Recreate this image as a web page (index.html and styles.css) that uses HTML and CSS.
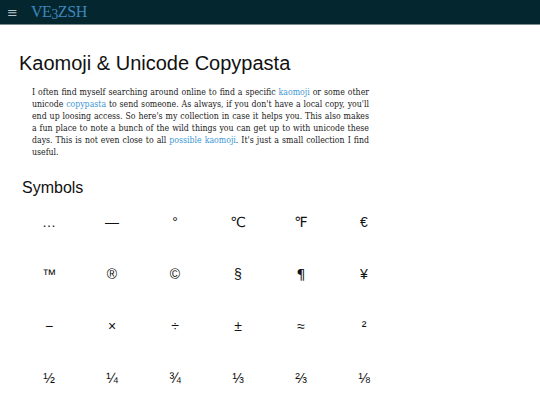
FILE: index.html
```html
<!DOCTYPE html>
<html lang="en">
<head>
<meta charset="utf-8">
<title>Kaomoji &amp; Unicode Copypasta</title>
<link rel="stylesheet" href="styles.css">
</head>
<body>
<header class="topbar">
  <span class="burger">&#8801;</span>
  <a class="brand" href="#">VE<span class="osf">3</span>ZSH</a>
</header>
<main class="content">
  <h1 class="title">Kaomoji &amp; Unicode Copypasta</h1>
  <p class="intro">I often find myself searching around online to find a specific <a href="#">kaomoji</a> or some other unicode <a href="#">copypasta</a> to send someone. As always, if you don't have a local copy, you'll end up loosing access. So here's my collection in case it helps you. This also makes a fun place to note a bunch of the wild things you can get up to with unicode these days. This is not even close to all <a href="#">possible kaomoji</a>. It's just a small collection I find useful.</p>
  <h2 class="section">Symbols</h2>
  <div class="grid">
    <span class="cell">&hellip;</span>
    <span class="cell">&mdash;</span>
    <span class="cell">&deg;</span>
    <span class="cell">&#8451;</span>
    <span class="cell">&#8457;</span>
    <span class="cell">&euro;</span>
    <span class="cell">&trade;</span>
    <span class="cell">&reg;</span>
    <span class="cell">&copy;</span>
    <span class="cell">&sect;</span>
    <span class="cell alt">&para;</span>
    <span class="cell">&yen;</span>
    <span class="cell">&minus;</span>
    <span class="cell">&times;</span>
    <span class="cell">&divide;</span>
    <span class="cell">&plusmn;</span>
    <span class="cell">&asymp;</span>
    <span class="cell">&sup2;</span>
    <span class="cell">&frac12;</span>
    <span class="cell">&frac14;</span>
    <span class="cell">&frac34;</span>
    <span class="cell">&#8531;</span>
    <span class="cell">&#8532;</span>
    <span class="cell">&#8539;</span>
  </div>
</main>
</body>
</html>
```
FILE: styles.css
```css
html, body {
  margin: 0;
  padding: 0;
  background: #ffffff;
}
body {
  font-family: "Liberation Sans", Arial, sans-serif;
  color: #111;
  overflow: hidden;
}
.topbar {
  height: 24px;
  background: #03262f;
  border-bottom: 1px solid #7b8b91;
  display: flex;
  align-items: center;
  padding-left: 7px;
  gap: 13px;
}
.burger {
  color: #b9c3c6;
  font-size: 13px;
  line-height: 1;
  font-family: "DejaVu Sans", sans-serif;
}
.brand {
  color: #3f86bd;
  text-decoration: none;
  font-family: "Liberation Serif", serif;
  font-size: 16px;
  letter-spacing: -0.4px;
  line-height: 24px;
}
.osf {
  font-size: 0.85em;
  position: relative;
  top: 0.18em;
}
.content {
  padding: 0 0 0 19px;
}
.title {
  margin: 26px 0 0 0;
  font-size: 20px;
  font-weight: normal;
  line-height: 24px;
  color: #111;
}
.intro {
  margin: 11px 0 0 13px;
  width: 337px;
  font-family: "DejaVu Serif Condensed", "DejaVu Serif", serif;
  font-stretch: condensed;
  font-size: 8.7px;
  line-height: 12px;
  text-align: justify;
  color: #222;
}
.intro a {
  color: #3d97d3;
  text-decoration: none;
}
.section {
  margin: 20px 0 0 3px;
  font-size: 16px;
  font-weight: normal;
  line-height: 20px;
  color: #111;
}
.grid {
  display: grid;
  grid-template-columns: repeat(6, 63px);
  grid-auto-rows: 52px;
  margin-left: -1.5px;
  margin-top: -2px;
  align-items: center;
}
.cell {
  text-align: center;
  font-family: "Liberation Sans", "DejaVu Sans", sans-serif;
  font-size: 14px;
  line-height: 20px;
  color: #111;
}
.cell.alt {
  font-family: "DejaVu Sans", sans-serif;
}
```
